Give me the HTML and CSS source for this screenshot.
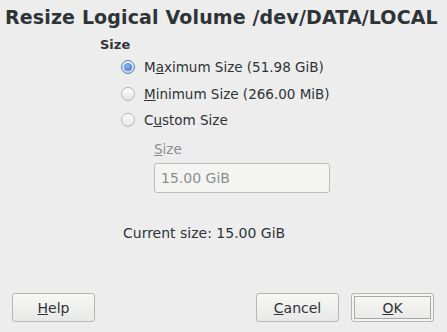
FILE: index.html
```html
<!DOCTYPE html>
<html lang="en">
<head>
    <meta charset="UTF-8">
    <title>Resize Logical Volume</title>
    <link rel="stylesheet" href="styles.css">
</head>
<body>

<div class="dialog">
    <h1 class="title">Resize Logical Volume /dev/DATA/LOCAL</h1>

    <div class="content">
        <div class="section-label">Size</div>

        <div class="options">
            <label class="radio-row">
                <span class="radio checked"></span>
                <span>M<u>a</u>ximum Size (51.98 GiB)</span>
            </label>
            <label class="radio-row">
                <span class="radio"></span>
                <span><u>M</u>inimum Size (266.00 MiB)</span>
            </label>
            <label class="radio-row">
                <span class="radio"></span>
                <span>C<u>u</u>stom Size</span>
            </label>

            <div class="custom">
                <div class="custom-label"><u>S</u>ize</div>
                <div class="entry">15.00 GiB</div>
            </div>
        </div>

        <div class="current">Current size: 15.00 GiB</div>
    </div>

    <div class="buttons">
        <button class="btn"><u>H</u>elp</button>
        <div class="spacer"></div>
        <button class="btn"><u>C</u>ancel</button>
        <button class="btn default"><u>O</u>K</button>
    </div>
</div>

</body>
</html>
```

FILE: styles.css
```css
/* Dialog */
body {
    margin: 0;
    padding: 0;
    background-color: #ededed;
    color: #2e3436;
    font-family: 'DejaVu Sans', sans-serif;
    font-size: 13px;
}

.dialog {
    width: 447px;
    height: 332px;
    display: flex;
    flex-direction: column;
}

.title {
    margin: 0;
    padding: 5px 0 0 5px;
    font-size: 19px;
    font-weight: bold;
    letter-spacing: 0.14px;
    line-height: 24px;
    white-space: nowrap;
}

.content {
    flex: 1;
    padding-left: 100px;
}

.section-label {
    margin-top: 8px;
    font-weight: bold;
    line-height: 16px;
}

.options {
    padding-left: 21px;
    margin-top: 1px;
    font-size: 13.5px;
}

.radio-row {
    display: flex;
    align-items: center;
    gap: 9px;
    height: 26.5px;
}

.radio {
    width: 12px;
    height: 12px;
    border-radius: 50%;
    border: 1px solid #b6b6b3;
    background: linear-gradient(#ffffff, #e4e4e2);
    position: relative;
}

.radio.checked {
    border-color: #5d7fa8;
    background: linear-gradient(#e8eef6, #c9d7e8);
}

.radio.checked::after {
    content: '';
    position: absolute;
    left: 2px;
    top: 2px;
    width: 8px;
    height: 8px;
    border-radius: 50%;
    background: radial-gradient(circle at 40% 35%, #8fb6ef, #3b73d1);
}

.custom {
    padding-left: 33px;
    margin-top: 7px;
}

.custom-label {
    color: #8b8e8f;
    line-height: 16px;
}

.entry {
    margin-top: 6px;
    width: 168px;
    height: 28px;
    border: 1px solid #bdbdb9;
    border-radius: 3px;
    background-color: #f4f4f2;
    color: #8b8e8f;
    padding-left: 6px;
    line-height: 28px;
    font-size: 14px;
}

.current {
    margin-top: 32px;
    margin-left: 23px;
    font-size: 14px;
}

.buttons {
    display: flex;
    padding: 0 13px 10px 12px;
    gap: 12px;
}

.spacer {
    flex: 1;
}

.btn {
    width: 83px;
    height: 29px;
    font-family: 'DejaVu Sans', sans-serif;
    font-size: 14px;
    color: #2e3436;
    border: 1px solid #b6b6b3;
    border-radius: 3px;
    background: linear-gradient(#f7f7f6, #e8e8e7);
    padding: 0;
}

.btn.default {
    box-shadow: inset 0 0 0 2px #f4f4f3, inset 0 0 0 3px #a9a9a7;
}
```
